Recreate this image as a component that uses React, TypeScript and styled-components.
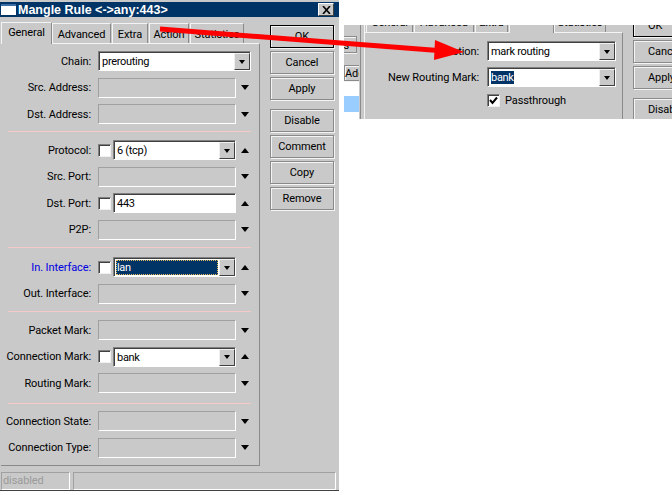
import React from "react";
import styled, { createGlobalStyle } from "styled-components";

const GlobalStyle = createGlobalStyle`
  html, body {
    margin: 0;
    padding: 0;
    background: #fff;
  }

  body {
    font-family: Roboto, "Liberation Sans", Arial, sans-serif;
    font-size: 11px;
    letter-spacing: -0.1px;
    color: #000;
  }
`;

const Page = styled.div`
  position: relative;
  width: 672px;
  height: 495px;
  overflow: hidden;
  display: flex;
  align-items: flex-start;
`;

const Window = styled.div`
  flex: none;
  width: 339px;
  height: 491px;
  background: #c9c9c9;
  border-bottom: 1px solid #404040;
  box-sizing: border-box;
  padding-top: 2px;
  display: flex;
  flex-direction: column;
`;

const TitleBar = styled.div`
  height: 15px;
  background: #003366;
  display: flex;
  align-items: center;
  padding: 0 5px 0 1px;
  color: #fff;
  font-family: "Liberation Sans", Arial, sans-serif;
  font-weight: bold;
  font-size: 12.5px;
  letter-spacing: 0;
`;

const WinIcon = styled.div`
  width: 15px;
  height: 11px;
  margin-right: 2px;
  background: #fff;
  border-top: 2px solid #3a6ea5;
  box-sizing: border-box;
`;

const CloseBtn = styled.div`
  margin-left: auto;
  width: 16px;
  height: 13px;
  background: #c9c9c9;
  border: 1px solid;
  border-color: #fff #404040 #404040 #fff;
  box-sizing: border-box;
  display: flex;
  align-items: center;
  justify-content: center;
`;

const Body = styled.div`
  display: flex;
  flex: 1;
  padding-left: 1px;
`;

const LeftCol = styled.div`
  width: 259px;
  flex: none;
`;

const Tabs = styled.div`
  display: flex;
  align-items: flex-end;
  height: 26px;
`;

const Tab = styled.div<{ $active?: boolean; $w: number }>`
  width: ${(p) => p.$w}px;
  height: ${(p) => (p.$active ? 22 : 20)}px;
  margin-right: ${(p) => (p.$active ? 0 : 1)}px;
  box-sizing: border-box;
  border-top: 1px solid #f4f4f4;
  border-left: 1px solid #f4f4f4;
  border-right: 1px solid #8a8a8a;
  background: #c9c9c9;
  text-align: center;
  line-height: ${(p) => (p.$active ? 19 : 21)}px;
  position: relative;
  z-index: ${(p) => (p.$active ? 1 : 0)};
  margin-bottom: ${(p) => (p.$active ? -1 : 0)}px;
`;

const Panel = styled.div`
  height: 423px;
  box-sizing: border-box;
  border-top: 1px solid #f4f4f4;
  border-right: 1px solid #8a8a8a;
  border-bottom: 1px solid #8a8a8a;
  padding-top: 4px;
`;

const Row = styled.div`
  height: 26.5px;
  display: flex;
  align-items: center;
`;

const Label = styled.div<{ $blue?: boolean }>`
  width: 90px;
  margin-right: 7px;
  flex: none;
  text-align: right;
  white-space: nowrap;
  color: ${(p) => (p.$blue ? "#0000e0" : "#000")};
`;

const Field = styled.div`
  width: 138px;
  height: 20px;
  flex: none;
  box-sizing: border-box;
  border: 1px solid;
  border-color: #a0a0a0 #fff #fff #a0a0a0;
`;

const Combo = styled.div<{ $w: number }>`
  width: ${(p) => p.$w}px;
  height: 20px;
  flex: none;
  box-sizing: border-box;
  border: 1px solid;
  border-color: #808080 #fff #fff #808080;
  background: #fff;
  box-shadow: inset 1px 1px 0 #404040;
  display: flex;
  align-items: stretch;
  padding: 1px 0 0 1px;
  line-height: 17px;
  letter-spacing: -0.3px;
`;

const ComboText = styled.div<{ $focus?: boolean }>`
  flex: 1;
  padding-left: 2px;
  ${(p) =>
    p.$focus
      ? `
    background: #003366;
    color: #fff;
    outline: 1px dotted #e8c060;
    outline-offset: -1px;
    margin: 1px;
    padding-left: 1px;
    line-height: 15px;
  `
      : ""}
`;

const Selected = styled.span`
  background: #003366;
  color: #fff;
`;

const ComboBtn = styled.div`
  width: 16px;
  flex: none;
  box-sizing: border-box;
  background: #c9c9c9;
  border: 1px solid;
  border-color: #f0f0f0 #404040 #404040 #f0f0f0;
  display: flex;
  align-items: center;
  justify-content: center;
`;

const Tri = styled.div<{ $up?: boolean; $size?: number }>`
  width: 0;
  height: 0;
  border-left: ${(p) => p.$size ?? 3.5}px solid transparent;
  border-right: ${(p) => p.$size ?? 3.5}px solid transparent;
  ${(p) => (p.$up ? "border-bottom" : "border-top")}: ${(p) =>
    Math.ceil(p.$size ?? 3.5)}px solid #000;
`;

const Mark = styled.div`
  width: 9px;
  margin-left: 4px;
  flex: none;
  display: flex;
  justify-content: center;
`;

const Check = styled.div`
  width: 13px;
  height: 13px;
  margin-right: 2px;
  flex: none;
  box-sizing: border-box;
  background: #fff;
  border: 1px solid;
  border-color: #808080 #f0f0f0 #f0f0f0 #808080;
  box-shadow: inset 1px 1px 0 #404040;
  display: flex;
  align-items: center;
  justify-content: center;
`;

const Sep = styled.div<{ $top: number; $bottom: number }>`
  width: 243px;
  height: 1px;
  margin: ${(p) => p.$top}px 0 ${(p) => p.$bottom}px 7px;
  background: #f6c8c8;
`;

const Buttons = styled.div`
  width: 64px;
  flex: none;
  margin-left: 10px;
  padding-top: 8px;
  display: flex;
  flex-direction: column;
  gap: 3px;
`;

const Btn = styled.div<{ $def?: boolean; $gap?: number }>`
  height: 23px;
  flex: none;
  box-sizing: border-box;
  border: 1px solid ${(p) => (p.$def ? "#000" : "#8a8a8a")};
  box-shadow: inset 1px 1px 0 #f4f4f4, 1px 1px 0 #f4f4f4;
  margin-top: ${(p) => p.$gap ?? 0}px;
  display: flex;
  align-items: center;
  justify-content: center;
`;

const Status = styled.div`
  display: flex;
  gap: 3px;
  padding: 3px 0 0 1px;
  height: 18px;
`;

const StatusCell = styled.div<{ $w: number }>`
  width: ${(p) => p.$w}px;
  height: 18px;
  box-sizing: border-box;
  border: 1px solid;
  border-color: #a0a0a0 #fff #fff #a0a0a0;
  color: #9a9a9a;
  line-height: 16px;
  padding-left: 1px;
`;

const Inset = styled.div`
  flex: none;
  margin: 25px 0 0 5px;
  width: 328px;
  height: 94px;
  overflow: hidden;
  display: flex;
  background: #c9c9c9;
`;

const Scrap = styled.div`
  width: 15px;
  flex: none;
  height: 94px;
  display: flex;
  flex-direction: column;
  overflow: hidden;
`;

const ScrapBtn = styled.div<{ $mt: number; $h: number }>`
  width: 28px;
  height: ${(p) => p.$h}px;
  margin-top: ${(p) => p.$mt}px;
  margin-left: -15px;
  padding: 2px 7px 0 0;
  flex: none;
  box-sizing: border-box;
  border: 1px solid #8a8a8a;
  box-shadow: inset 1px 1px 0 #f4f4f4, 0 1px 0 #f4f4f4;
  display: flex;
  align-items: center;
  justify-content: flex-end;
`;

const ScrapAdd = styled(ScrapBtn)`
  width: 30px;
  margin-left: 0;
  padding: 0;
  justify-content: flex-start;
`;

const ScrapList = styled.div`
  flex: 1;
  background: #fff;
  padding-top: 14px;
  margin-top: 1px;
`;

const ScrapRow = styled.div`
  height: 16px;
  background: #99ccff;
`;

const Gutter = styled.div`
  width: 5px;
  flex: none;
  box-sizing: border-box;
  border-left: 1px solid #8a8a8a;
  border-right: 1px solid #f4f4f4;
  margin-left: 1px;
`;

const InsetCol = styled.div`
  width: 259px;
  flex: none;
  margin-left: -1px;
`;

const InsetTabs = styled.div`
  height: 7px;
  display: flex;
  align-items: flex-end;
  padding-left: 2px;
`;

const InsetTab = styled.div<{ $w: number; $active?: boolean }>`
  width: ${(p) => p.$w}px;
  height: ${(p) => (p.$active ? 22 : 20)}px;
  flex: none;
  margin-right: ${(p) => (p.$active ? 0 : 1)}px;
  margin-bottom: ${(p) => (p.$active ? -1 : 0)}px;
  box-sizing: border-box;
  border-right: 1px solid #8a8a8a;
  border-left: 1px solid #f4f4f4;
  background: #c9c9c9;
  text-align: center;
  line-height: 21px;
  position: relative;
  z-index: ${(p) => (p.$active ? 1 : 0)};
`;

const InsetPanel = styled.div`
  height: 87px;
  box-sizing: border-box;
  border-top: 1px solid #f4f4f4;
  border-right: 1px solid #8a8a8a;
  border-left: 1px solid #f4f4f4;
  padding-top: 5px;
`;

const InsetRow = styled.div`
  height: 26px;
  display: flex;
  align-items: center;
`;

const InsetLabel = styled.div`
  width: 114px;
  margin-right: 8px;
  flex: none;
  text-align: right;
  white-space: nowrap;
`;

const PassRow = styled(InsetRow)`
  height: 20px;
`;

const PassLabel = styled.span`
  margin-left: 3px;
`;

const InsetButtons = styled.div`
  width: 64px;
  flex: none;
  margin-left: 10px;
  margin-top: -11px;
  display: flex;
  flex-direction: column;
  gap: 3px;
  white-space: nowrap;
`;

const CutBtn = styled(Btn)`
  justify-content: flex-start;
  padding-left: 14px;
  width: 64px;
`;

const ArrowLayer = styled.svg`
  position: absolute;
  left: 0;
  top: 0;
  pointer-events: none;
`;

const Down = () => (
  <Mark>
    <Tri $size={4.5} />
  </Mark>
);

const Up = () => (
  <Mark>
    <Tri $up $size={4.5} />
  </Mark>
);

const Empty: React.FC<{ label: string }> = ({ label }) => (
  <Row>
    <Label>{label}</Label>
    <Field />
    <Down />
  </Row>
);

const Negatable: React.FC<{
  label: string;
  value: string;
  blue?: boolean;
  focus?: boolean;
  dropdown?: boolean;
}> = ({ label, value, blue, focus, dropdown = true }) => (
  <Row>
    <Label $blue={blue}>{label}</Label>
    <Check />
    <Combo $w={123}>
      <ComboText $focus={focus}>{value}</ComboText>
      {dropdown && (
        <ComboBtn>
          <Tri />
        </ComboBtn>
      )}
    </Combo>
    <Up />
  </Row>
);

const App: React.FC = () => {
  return (
    <Page>
      <GlobalStyle />
      <Window>
        <TitleBar>
          <WinIcon />
          Mangle Rule &lt;-&gt;any:443&gt;
          <CloseBtn>
            <svg width="9" height="8" viewBox="0 0 9 8">
              <path d="M1 0 L8 8 M8 0 L1 8" stroke="#000" strokeWidth="1.6" />
            </svg>
          </CloseBtn>
        </TitleBar>
        <Body>
          <LeftCol>
            <Tabs>
              <Tab $active $w={51}>General</Tab>
              <Tab $w={59}>Advanced</Tab>
              <Tab $w={36}>Extra</Tab>
              <Tab $w={40}>Action</Tab>
              <Tab $w={54}>Statistics</Tab>
            </Tabs>
            <Panel>
              <Row>
                <Label>Chain:</Label>
                <Combo $w={153}>
                  <ComboText>prerouting</ComboText>
                  <ComboBtn>
                    <Tri />
                  </ComboBtn>
                </Combo>
              </Row>
              <Empty label="Src. Address:" />
              <Empty label="Dst. Address:" />
              <Sep $top={3.5} $bottom={5} />
              <Negatable label="Protocol:" value="6 (tcp)" />
              <Empty label="Src. Port:" />
              <Negatable label="Dst. Port:" value="443" dropdown={false} />
              <Empty label="P2P:" />
              <Sep $top={4} $bottom={6} />
              <Negatable label="In. Interface:" value="lan" blue focus />
              <Empty label="Out. Interface:" />
              <Sep $top={4} $bottom={5} />
              <Empty label="Packet Mark:" />
              <Negatable label="Connection Mark:" value="bank" />
              <Empty label="Routing Mark:" />
              <Sep $top={6.5} $bottom={4} />
              <Empty label="Connection State:" />
              <Empty label="Connection Type:" />
            </Panel>
          </LeftCol>
          <Buttons>
            <Btn $def>OK</Btn>
            <Btn>Cancel</Btn>
            <Btn>Apply</Btn>
            <Btn $gap={6}>Disable</Btn>
            <Btn>Comment</Btn>
            <Btn>Copy</Btn>
            <Btn>Remove</Btn>
          </Buttons>
        </Body>
        <Status>
          <StatusCell $w={69}>disabled</StatusCell>
          <StatusCell $w={263} />
        </Status>
      </Window>

      <Inset>
        <Scrap>
          <ScrapBtn $mt={11} $h={17}>s</ScrapBtn>
          <ScrapAdd $mt={12} $h={16}>Add</ScrapAdd>
          <ScrapList>
            <ScrapRow />
          </ScrapList>
        </Scrap>
        <Gutter />
        <InsetCol>
          <InsetTabs>
            <InsetTab $w={47}>General</InsetTab>
            <InsetTab $w={60}>Advanced</InsetTab>
            <InsetTab $w={33}>Extra</InsetTab>
            <InsetTab $active $w={45}>Action</InsetTab>
            <InsetTab $w={52}>Statistics</InsetTab>
          </InsetTabs>
          <InsetPanel>
            <InsetRow>
              <InsetLabel>Action:</InsetLabel>
              <Combo $w={129}>
                <ComboText>mark routing</ComboText>
                <ComboBtn>
                  <Tri />
                </ComboBtn>
              </Combo>
            </InsetRow>
            <InsetRow>
              <InsetLabel>New Routing Mark:</InsetLabel>
              <Combo $w={129}>
                <ComboText>
                  <Selected>bank</Selected>
                </ComboText>
                <ComboBtn>
                  <Tri />
                </ComboBtn>
              </Combo>
            </InsetRow>
            <PassRow>
              <InsetLabel />
              <Check>
                <svg width="9" height="9" viewBox="0 0 9 9">
                  <path d="M1 4 L3.5 7 L8 1.5" fill="none" stroke="#000" strokeWidth="2" />
                </svg>
              </Check>
              <PassLabel>Passthrough</PassLabel>
            </PassRow>
          </InsetPanel>
        </InsetCol>
        <InsetButtons>
          <CutBtn $def>OK</CutBtn>
          <CutBtn>Cancel</CutBtn>
          <CutBtn>Apply</CutBtn>
          <CutBtn $gap={6}>Disable</CutBtn>
        </InsetButtons>
      </Inset>

      <ArrowLayer width="672" height="495" viewBox="0 0 672 495">
        <path d="M160 29 L438 50.5" stroke="#ff0000" strokeWidth="5" />
        <polygon points="435,40 464,52 434,60" fill="#ff0000" />
      </ArrowLayer>
    </Page>
  );
};

export default App;
